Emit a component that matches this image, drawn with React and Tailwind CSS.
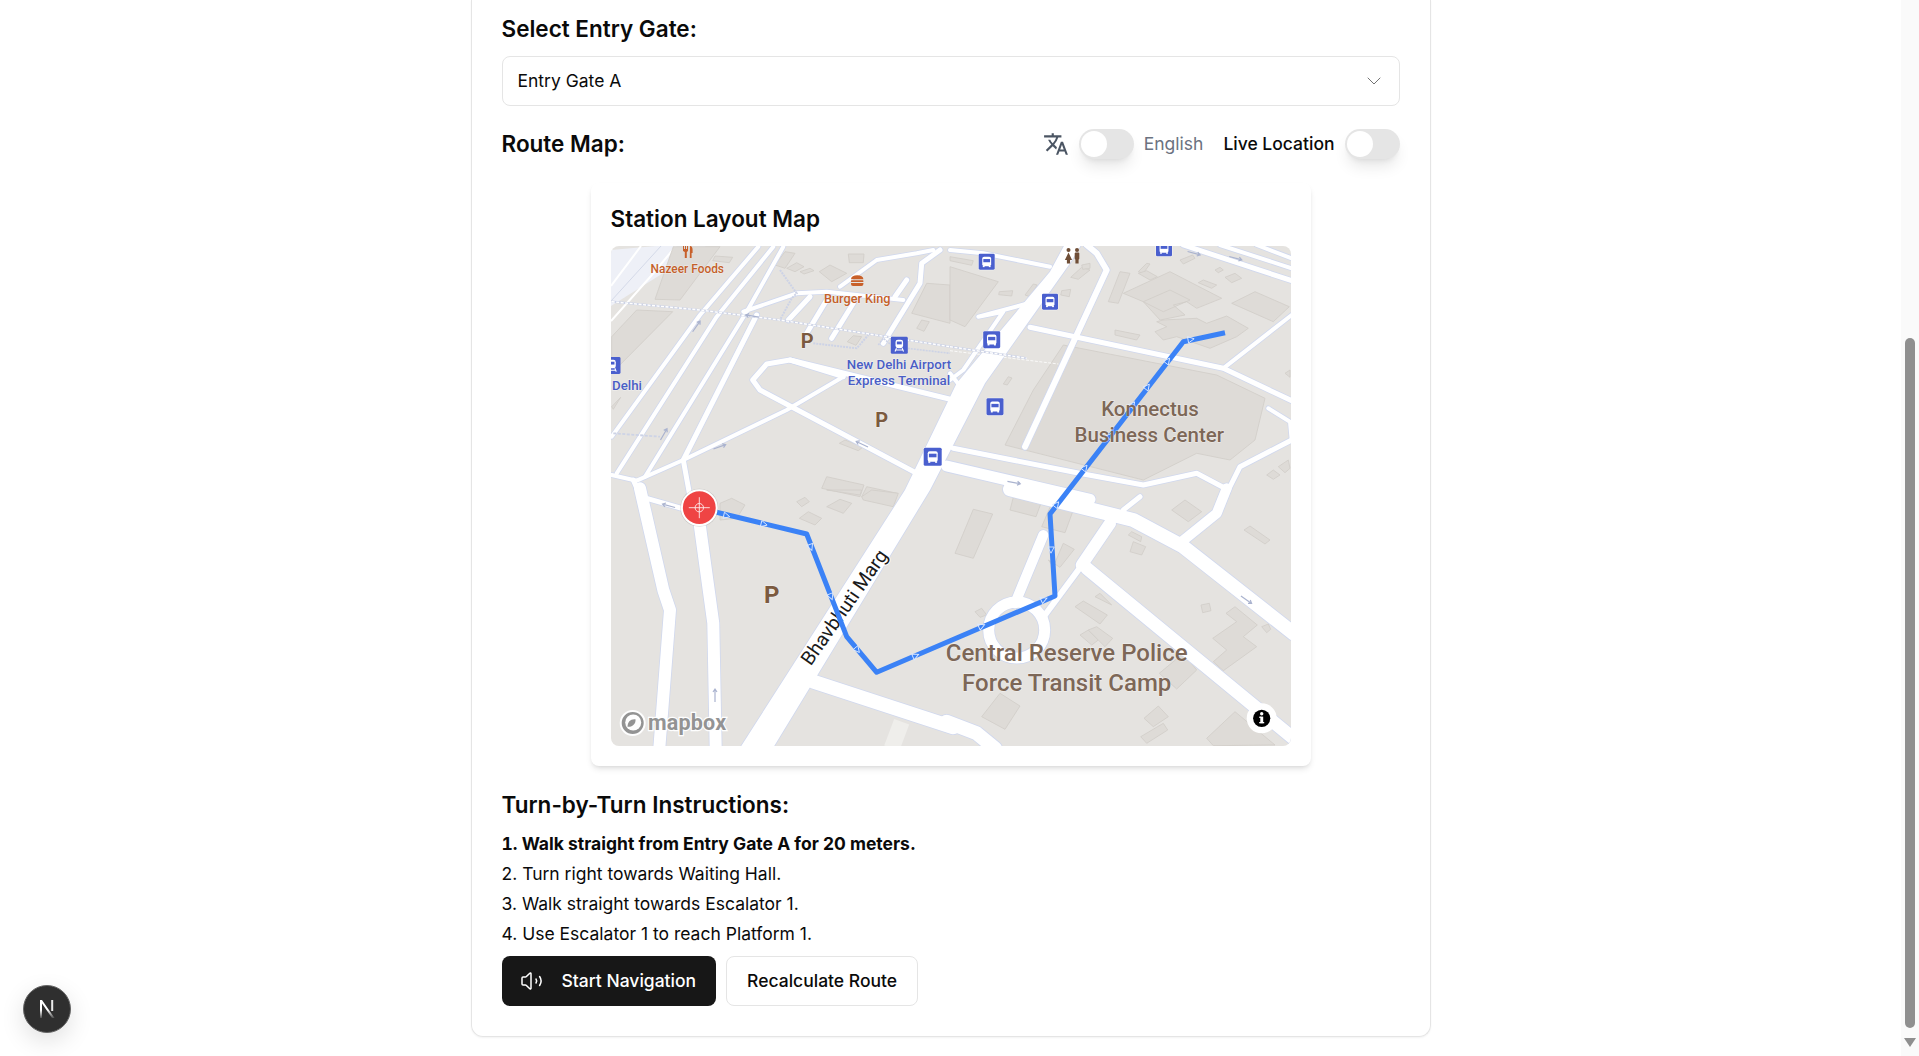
import React from "react";
import { ChevronDown } from "lucide-react";
import { MdTranslate } from "react-icons/md";

const OFF = { a: [-11, -6], b: [339, -6], c: [-11, 244], d: [339, 244] };
const pts = (q, arr) => {
  const [ox, oy] = OFF[q];
  const out = [];
  for (let i = 0; i < arr.length; i += 2) out.push(`${(arr[i] / 3 + ox).toFixed(1)},${(arr[i + 1] / 3 + oy).toFixed(1)}`);
  return out.join(" ");
};

const BUILDINGS = [
  ["a", [110,210,218,215,35,400,35,290]],
  ["a", [220,20,360,20,240,180,165,178]],
  ["a", [345,48,398,52,388,68,338,62]],
  ["a", [525,75,555,35,585,40,555,85]],
  ["a", [560,85,590,68,612,80,585,95]],
  ["a", [600,95,630,85,642,92,612,102]],
  ["a", [658,95,690,75,740,100,695,125]],
  ["a", [745,42,792,42,790,68,748,68]],
  ["a", [742,305,760,287,785,290,768,316]],
  ["a", [950,265,965,240,988,245,972,274]],
  ["a", [935,220,980,130,1050,135,1050,250]],
  ["a", [718,610,735,600,790,620,775,632]],
  ["a", [665,745,680,710,792,735,780,770]],
  ["a", [785,770,800,740,892,760,880,790]],
  ["a", [35,500,62,472,40,508]],
  ["b", [0,80,145,125,45,260,0,240]],
  ["b", [0,50,70,62,65,76,0,62]],
  ["b", [148,155,188,152,185,168,146,164]],
  ["b", [225,165,250,132,262,135,240,170]],
  ["b", [335,152,362,148,358,170,332,165]],
  ["b", [362,112,395,82,420,90,385,118]],
  ["b", [395,75,420,70,420,85,398,88]],
  ["b", [160,432,175,410,186,414,172,435]],
  ["b", [165,615,250,450,340,315,800,405,945,475,915,600,840,660,740,640,580,720]],
  ["b", [510,95,540,100,505,190,475,185]],
  ["b", [520,160,660,95,815,175,740,205,710,185,670,195,705,225,630,240,580,185,660,150,720,180,640,215,580,185]],
  ["b", [640,240,740,235,770,250,830,228,895,265,860,290,780,325,680,290,640,300,615,275,650,260,620,245]],
  ["b", [845,190,915,155,1018,200,970,245]],
  ["b", [495,270,570,285,560,300,495,285]],
  ["b", [565,95,590,70,600,72,580,100]],
  ["b", [565,100,590,92,622,110,600,120]],
  ["b", [690,60,728,45,735,55,700,72]],
  ["b", [745,128,760,120,800,135,785,145]],
  ["b", [825,112,855,100,875,115,845,128]],
  ["b", [795,90,810,82,820,90,805,98]],
  ["b", [950,705,970,690,990,705,970,718]],
  ["b", [985,680,1015,660,1020,685,1005,698]],
  ["b", [1005,400,1020,390,1020,412]],
  ["c", [360,40,395,25,435,45,410,85,360,90]],
  ["c", [590,35,615,22,628,35,605,50]],
  ["c", [680,50,720,28,755,40,730,70]],
  ["c", [598,85,625,65,665,85,645,105]],
  ["c", [680,0,780,15,785,0]],
  ["c", [785,20,815,0,895,10,880,50,790,30]],
  ["d", [70,58,128,72,70,205,15,190]],
  ["d", [190,22,272,42,258,80,180,60]],
  ["d", [305,40,370,60,345,128,275,110]],
  ["d", [310,230,340,160,373,178,330,232,295,210]],
  ["d", [375,350,400,333,472,375,450,402]],
  ["d", [390,435,415,420,445,450,425,465]],
  ["d", [415,420,440,410,488,445,465,470]],
  ["d", [435,320,450,310,485,345]],
  ["d", [535,135,545,125,575,140,572,155]],
  ["d", [540,185,550,155,587,170,575,195]],
  ["d", [665,60,705,30,755,65,715,95]],
  ["d", [882,120,900,108,960,150,945,162]],
  ["d", [753,345,778,340,783,362,758,368]],
  ["d", [788,445,860,395,828,370,855,350,922,405,880,440,920,470,820,542,790,515,830,480]],
  ["d", [628,550,700,490,740,540,680,597]],
  ["d", [95,680,150,610,210,648,165,718]],
  ["d", [582,685,625,648,655,680,610,710]],
  ["d", [572,740,640,700,653,720,590,760]],
  ["d", [770,745,855,665,975,765,790,767]],
  ["d", [75,365,95,355,110,375,90,382]],
  ["d", [935,410,955,402,962,418,950,428]],
];

const ROADS = [
  ["a", [475,20,300,225,35,590], 4],
  ["a", [520,20,350,230,50,700], 4],
  ["a", [550,20,440,215,135,710], 4],
  ["a", [470,225,250,660,270,770], 5],
  ["a", [35,705,110,722,250,660,560,510,730,410], 4],
  ["a", [730,410,570,360,500,372,458,420,480,450,950,700], 5],
  ["a", [570,360,1060,480], 5],
  ["a", [430,215,590,160,680,155,910,180], 4],
  ["a", [630,170,565,240], 5],
  ["a", [680,180,620,280], 5],
  ["a", [760,190,695,295], 5],
  ["a", [920,120,885,170], 5],
  ["a", [1000,30,950,40,830,60,720,140], 4],
  ["a", [1020,30,965,70,960,130,850,310], 5],
  ["a", [100,720,130,790], 5],
  ["b", [0,30,100,40,300,80], 4],
  ["b", [0,420,40,390,160,215,85,230,235,190], 4],
  ["b", [0,400,55,470], 4],
  ["b", [225,620,470,90,440,40,410,15], 6],
  ["b", [240,262,820,385,1025,482], 5],
  ["b", [820,385,1025,225], 4],
  ["b", [10,625,400,702,580,735,740,700,825,745], 5],
  ["b", [-10,678,420,778], 11],
  ["b", [1025,600,870,680,820,780], 5],
  ["b", [955,505,1020,545,1025,600], 4],
  ["b", [700,15,1025,122], 5],
  ["b", [810,15,1025,85], 4],
  ["b", [920,15,1025,55], 4],
  ["c", [120,-5,190,300,210,360,178,775], 12],
  ["c", [300,110,340,400,347,775], 12],
  ["c", [140,25,245,55], 5],
  ["c", [640,575,1060,712], 14],
  ["d", [180,-2,550,90,700,170,1030,430], 14],
  ["d", [480,100,395,225], 12],
  ["d", [385,240,285,375], 6],
  ["d", [280,135,195,340], 10],
  ["d", [410,235,1030,745], 13],
  ["d", [830,-5,800,70,695,155], 10],
  ["d", [520,60,570,20], 5],
  ["d", [-10,695,80,730,135,775], 14],
];

const MAIN_ROAD = "129,502 294,244 345.7,137.3 439,25.7 454,-2 470.7,-2 459,17.3 374,137.3 319,244 162,502";

const ARROWS = [
  ["c",380,78,14],["c",492,103,14],["c",632,172,68],["c",693,320,68],["c",772,480,50],["c",947,497,-24],
  ["d",95,408,-24],["d",282,328,-24],["d",303,180,90],["d",320,43,-52],
  ["b",405,683,-52],["b",480,587,-52],["b",548,493,-52],["b",592,440,-52],["b",653,362,-52],["b",723,298,-10],
];

const Bus = ({ x, y, s = 17 }) => (
  <g transform={`translate(${x - s / 2} ${y - s / 2}) scale(${s / 18})`}>
    <rect x="-0.5" y="-0.5" width="19" height="19" rx="2" fill="#fff" opacity="0.7" />
    <rect width="18" height="18" rx="1.5" fill="#4a5fce" />
    <rect x="4" y="3.5" width="10" height="10.5" rx="2" fill="#fff" />
    <rect x="5.2" y="6" width="7.6" height="3.6" fill="#4a5fce" />
    <rect x="4.6" y="13.5" width="2" height="1.6" fill="#fff" />
    <rect x="11.4" y="13.5" width="2" height="1.6" fill="#fff" />
  </g>
);

const Train = ({ x, y, s = 17 }) => (
  <g transform={`translate(${x - s / 2} ${y - s / 2}) scale(${s / 18})`}>
    <rect width="18" height="18" rx="1.5" fill="#4a5fce" />
    <rect x="5" y="3" width="8" height="9" rx="2.5" fill="#fff" />
    <rect x="6.4" y="5" width="5.2" height="3" fill="#4a5fce" />
    <path d="M6 12 L4.5 15.5 M12 12 L13.5 15.5 M5 14 H13" stroke="#fff" strokeWidth="1.2" fill="none" />
  </g>
);

const Label = ({ x, y, size, color, anchor = "middle", weight = 500, children }) => (
  <text
    x={x}
    y={y}
    fontSize={size}
    fontWeight={weight}
    fill={color}
    textAnchor={anchor}
    dominantBaseline="middle"
    stroke="#ffffff"
    strokeOpacity="0.55"
    strokeWidth="1"
    paintOrder="stroke"
    fontFamily="Roboto, sans-serif"
  >
    {children}
  </text>
);

function MapArt() {
  return (
    <svg width="680" height="500" viewBox="0 0 680 500" className="block">
      <rect width="680" height="500" fill="#e5e3e0" />
      <polygon points="0,4 45,0 95,0 0,60" fill="#eef0f7" />
      <polyline points="0,55 50,0" fill="none" stroke="#d4d9e8" strokeWidth="1" />
      <polyline points="0,75 40,30 65,0" fill="none" stroke="#ffffff" strokeWidth="2" />
      <polyline points="0,40 30,0" fill="none" stroke="#ffffff" strokeWidth="2" />
      {BUILDINGS.map(([q, a], i) => (
        <polygon key={i} points={pts(q, a)} fill="#dedbd7" stroke="#d0cdc8" strokeWidth="0.8" />
      ))}
      {/* casing */}
      <polygon points={MAIN_ROAD} fill="#d0d8ee" stroke="#d0d8ee" strokeWidth="1.6" />
      {ROADS.map(([q, a, w], i) => (
        <polyline key={i} points={pts(q, a)} fill="none" stroke="#d0d8ee" strokeWidth={w + 1.6} strokeLinejoin="round" strokeLinecap="round" />
      ))}
      <circle cx="405.7" cy="384" r="28" fill="none" stroke="#d0d8ee" strokeWidth="12.6" />
      {/* white */}
      <polygon points={MAIN_ROAD} fill="#ffffff" />
      {ROADS.map(([q, a, w], i) => (
        <polyline key={i} points={pts(q, a)} fill="none" stroke="#ffffff" strokeWidth={w} strokeLinejoin="round" strokeLinecap="round" />
      ))}
      <circle cx="405.7" cy="384" r="28" fill="none" stroke="#ffffff" strokeWidth="11" />
      <polyline points={pts("c", [905,695,875,775])} fill="none" stroke="#efeeeb" strokeWidth="16" />
      {/* footpaths */}
      <polyline points={pts("a", [35,185,300,210,540,240,1050,320])} fill="none" stroke="#cdd3e6" strokeWidth="2.2" />
      <polyline points={pts("a", [35,185,300,210,540,240,1050,320])} fill="none" stroke="#ffffff" strokeWidth="1.4" strokeDasharray="3 1.5" />
      <polyline points={pts("b", [0,320,230,355])} fill="none" stroke="#cdd3e6" strokeWidth="2.2" />
      <polyline points={pts("b", [0,320,230,355])} fill="none" stroke="#ffffff" strokeWidth="1.4" strokeDasharray="3 1.5" />
      <polyline points={pts("b", [0,332,325,372])} fill="none" stroke="#ffffff" strokeWidth="0.8" strokeDasharray="3 1.5" />
      <polyline points={pts("a", [540,90,590,160,575,175,540,240])} fill="none" stroke="#cdd3e6" strokeWidth="2" strokeDasharray="2 1" />
      <polyline points={pts("a", [640,310,770,325,805,285])} fill="none" stroke="#cdd3e6" strokeWidth="2" strokeDasharray="2 1" />
      <polyline points={pts("a", [835,315,850,295,880,320,1050,340])} fill="none" stroke="#cdd3e6" strokeWidth="1.6" strokeDasharray="2 1" />
      <polyline points={pts("a", [40,580,180,590])} fill="none" stroke="#cdd3e6" strokeWidth="1.8" strokeDasharray="3 1.5" />
      {/* one-way arrows */}
      {[["a",290,258,-55],["a",192,582,-60],["a",360,620,-20],["a",785,612,-155],["a",455,228,-170],["b",193,728,10],["c",205,47,195],["c",345,615,-90],["d",890,330,35],["b",733,40,15],["b",858,55,15]].map(([q,x,y,r],i)=>{
        const [ox,oy]=OFF[q];
        return (
          <g key={i} transform={`translate(${x/3+ox} ${y/3+oy}) rotate(${r})`} stroke="#aab3cf" fill="none" strokeWidth="1.2">
            <path d="M-7 0 H6 M3 -2 L6 0 L3 2" />
          </g>
        );
      })}
      <text x="234.5" y="362" transform="rotate(-55 234.5 362)" fontSize="19.4" fill="#1a1a1a" textAnchor="middle" dominantBaseline="middle" fontFamily="Roboto, sans-serif" stroke="#fff" strokeWidth="2" paintOrder="stroke">Bhavbhuti Marg</text>
      {/* route */}
      <polyline
        points="88,262 195.7,288 235.7,390.7 265.7,426.3 444,350 439,268 572.3,95.7 614,86.7"
        fill="none" stroke="#3b82f6" strokeWidth="5" strokeLinejoin="round"
      />
      {ARROWS.map(([q,x,y,r],i)=>{
        const [ox,oy]=OFF[q];
        return (
          <path key={i} d="M-3 -3.2 L3.2 0 L-3 3.2 Z" transform={`translate(${x/3+ox} ${y/3+oy}) rotate(${r})`} fill="none" stroke="#dbe8ff" strokeWidth="0.9" />
        );
      })}
      {/* start marker */}
      <circle cx="88.3" cy="261.7" r="19" fill="#00000022" />
      <circle cx="88.3" cy="261.7" r="17.4" fill="#ef4444" stroke="#ffffff" strokeWidth="2" />
      <g stroke="#ffffff" strokeWidth="0.9" fill="none" opacity="0.9">
        <circle cx="88.3" cy="261.7" r="4.2" />
        <path d="M77.8 261.7 H98.8 M88.3 251.2 V272.2" />
      </g>
      {/* POI */}
      <g fill="#c8602a">
        <path d="M72 0 h1 v3 h1 v-3 h1 v3 h1 v-3 h1 v5 l-1.2 1 v6 h-2 v-6 l-1.8 -1 z" />
        <path d="M79 0 c2 0 2.6 2 2.6 4 v3 h-1 v5 h-1.8 z" />
        <path d="M240 33.2 a6.2 4 0 0 1 12.4 0 z" />
        <rect x="240" y="34.2" width="12.4" height="1.8" rx="0.6" />
        <path d="M240 37 h12.4 v1 a2 2 0 0 1 -2 2 h-8.4 a2 2 0 0 1 -2 -2 z" />
      </g>
      <Label x={76.3} y={24} size={11.9} color="#c4602a">Nazeer Foods</Label>
      <Label x={246.3} y={54} size={12.7} color="#c4602a">Burger King</Label>
      <Label x={196.3} y={97} size={20} weight={700} color="#7b5a3f">P</Label>
      <Label x={270.7} y={175.5} size={20} weight={700} color="#7b5a3f">P</Label>
      <Label x={160.7} y={351} size={24} weight={700} color="#7b5a3f">P</Label>
      <Train x={288.3} y={99.3} s={17} />
      <Label x={288} y={119.5} size={13.3} color="#4a5ec5">New Delhi Airport</Label>
      <Label x={288} y={135.5} size={13.3} color="#4a5ec5">Express Terminal</Label>
      <Train x={1} y={119.5} s={17} />
      <Label x={1} y={140} size={13.3} color="#4a5ec5" anchor="start">Delhi</Label>
      <Bus x={321.7} y={210.7} s={18} />
      <Bus x={375.7} y={15.7} s={16} />
      <Bus x={439} y={55.7} s={16} />
      <Bus x={380.7} y={93.7} s={17} />
      <Bus x={384} y={160.7} s={17} />
      <Bus x={553} y={2.3} s={16} />
      <g fill="#6f4e37">
        <circle cx="457.5" cy="4" r="2" />
        <path d="M457.5 6.5 l3.6 7.5 h-2 v3.5 h-3.2 v-3.5 h-2 z" />
        <circle cx="466" cy="4" r="2" />
        <rect x="463.7" y="6.5" width="4.6" height="7" rx="1" />
        <rect x="464.4" y="13" width="3.2" height="4.5" />
      </g>
      <Label x={539} y={165} size={20.5} color="#7d6757">Konnectus</Label>
      <Label x={538.3} y={191} size={20.5} color="#7d6757">Business Center</Label>
      <Label x={455.7} y={408.5} size={24} color="#7d6757">Central Reserve Police</Label>
      <Label x={455.7} y={438.5} size={24} color="#7d6757">Force Transit Camp</Label>
      {/* mapbox attribution */}
      <g opacity="0.95">
        <circle cx="21.7" cy="477" r="12" fill="#8f8f8f" stroke="#fff" strokeWidth="2" />
        <circle cx="22.2" cy="476.5" r="8" fill="#fff" />
        <path d="M16.5 480.8 c0 -5 3 -8 8 -7.5 c0.5 4.5 -3 8 -8 7.5 z" fill="#8f8f8f" />
        <text x="37" y="478.5" fontSize="21.5" fontWeight="700" fill="#8f8f8f" stroke="#fff" strokeWidth="2.4" paintOrder="stroke" dominantBaseline="middle" fontFamily="Roboto, sans-serif" letterSpacing="0.2">mapbox</text>
      </g>
      <circle cx="650.7" cy="472.3" r="15" fill="#ffffff" />
      <circle cx="650.7" cy="472.3" r="8.6" fill="#000000" />
      <rect x="649.3" y="470.6" width="2.9" height="6.6" fill="#fff" />
      <rect x="648.2" y="470.6" width="2" height="1.3" fill="#fff" />
      <rect x="648.2" y="476" width="5" height="1.3" fill="#fff" />
      <circle cx="650.7" cy="467.8" r="1.7" fill="#fff" />
    </svg>
  );
}

function Toggle() {
  return (
    <div className="flex h-[30px] w-[55px] items-center rounded-full bg-[#e5e5e5] pl-[2px] shadow-[0_10px_15px_-3px_rgba(0,0,0,0.1),0_4px_6px_-4px_rgba(0,0,0,0.1)]">
      <div className="h-[26px] w-[26px] rounded-full bg-white" />
    </div>
  );
}

export default function App() {
  return (
    <div className="relative flex h-[1056px] w-full overflow-hidden bg-white font-['Inter',sans-serif] text-[#0a0a0a]">
      <main className="min-w-0 flex-1">
        <div className="mx-auto h-[1037px] w-[960px] rounded-b-xl border-x border-b border-[#e5e5e5] px-[30px] pt-[15px] shadow-[0_1px_2px_rgba(0,0,0,0.05)]">
          <h2 className="text-[22.5px] leading-7 font-semibold">Select Entry Gate:</h2>
          <div className="mt-[13px] flex h-[50px] items-center justify-between rounded-lg border border-[#e5e5e5] pr-[13px] pl-[15px]">
            <span className="pt-px text-[17.5px]">Entry Gate A</span>
            <ChevronDown className="h-6 w-6 text-[#737373]" strokeWidth={1} />
          </div>

          <div className="mt-[23px] flex h-[30px] items-center justify-between">
            <h2 className="text-[22.5px] leading-7 font-semibold">Route Map:</h2>
            <div className="flex items-center">
              <MdTranslate className="h-[26px] w-[26px] text-[#4b5563]" />
              <div className="ml-[10px]"><Toggle /></div>
              <span className="ml-[10px] text-[17.5px] text-[#6b7280]">English</span>
              <span className="ml-5 text-[17.5px] font-medium">Live Location</span>
              <div className="ml-[10px]"><Toggle /></div>
            </div>
          </div>

          <div className="mx-auto mt-6 h-[583px] w-[720px] rounded-lg bg-white px-5 pt-[22px] shadow-[0_4px_6px_-1px_rgba(0,0,0,0.1),0_2px_4px_-2px_rgba(0,0,0,0.1)]">
            <h3 className="mb-[13px] text-[22.5px] leading-7 font-semibold">Station Layout Map</h3>
            <div className="h-[500px] w-[680px] overflow-hidden rounded-lg">
              <MapArt />
            </div>
          </div>

          <h2 className="mt-[25px] text-[22.5px] leading-7 font-semibold">Turn-by-Turn Instructions:</h2>
          <ol className="mt-[13px] flex flex-col gap-1.5 text-[17.5px] leading-6">
            <li className="font-bold"><span className="tabular-nums">1.</span> Walk straight from Entry Gate A for 20 meters.</li>
            <li>2. Turn right towards Waiting Hall.</li>
            <li>3. Walk straight towards Escalator 1.</li>
            <li>4. Use Escalator 1 to reach Platform 1.</li>
          </ol>
          <div className="mt-[10px] flex gap-[10px]">
            <button className="flex h-[50px] items-center gap-[18px] rounded-lg bg-[#171717] pr-5 pl-[18px] text-[17.5px] font-medium text-white">
              <svg width="24" height="24" viewBox="0 0 24 24" fill="none" stroke="currentColor" strokeWidth="1.5" strokeLinecap="round" strokeLinejoin="round">
                <path d="M11 4.702a.705.705 0 0 0-1.203-.498L6.413 7.587A1.4 1.4 0 0 1 5.416 8H3a1 1 0 0 0-1 1v6a1 1 0 0 0 1 1h2.416a1.4 1.4 0 0 1 .997.413l3.383 3.384A.705.705 0 0 0 11 19.298z" />
                <path d="M16 10a3.6 3.6 0 0 1 0 4" />
                <path d="M19.6 7.5a8 8 0 0 1 0 9" />
              </svg>
              Start Navigation
            </button>
            <button className="flex h-[50px] items-center rounded-lg border border-[#e5e5e5] bg-white px-5 text-[17.5px] font-medium">
              Recalculate Route
            </button>
          </div>
        </div>
      </main>

      <aside className="flex w-[18px] shrink-0 flex-col items-center bg-[#fafafa] pt-[338px]">
        <div className="h-[690px] w-[10px] rounded-full bg-[#8f8f8f]" />
        <div className="mt-[10px] h-0 w-0 border-x-[6px] border-t-[9px] border-x-transparent border-t-[#8f8f8f]" />
      </aside>

      <div className="absolute bottom-[23px] left-[23px] flex h-12 w-12 items-center justify-center rounded-full border border-[#666] bg-[#2f2f2f] shadow-[0_8px_24px_rgba(0,0,0,0.12)]">
        <svg width="18" height="20" viewBox="0 0 18 20">
          <defs>
            <linearGradient id="ng" x1="0" y1="0" x2="0" y2="1">
              <stop offset="0.55" stopColor="#fff" />
              <stop offset="1" stopColor="#fff" stopOpacity="0.15" />
            </linearGradient>
          </defs>
          <path d="M2 19 V1 H4 L16.5 19 H14 L4 4.5 V19 Z" fill="url(#ng)" />
          <rect x="13.2" y="1" width="2" height="11" fill="#fff" opacity="0.9" />
        </svg>
      </div>
    </div>
  );
}
